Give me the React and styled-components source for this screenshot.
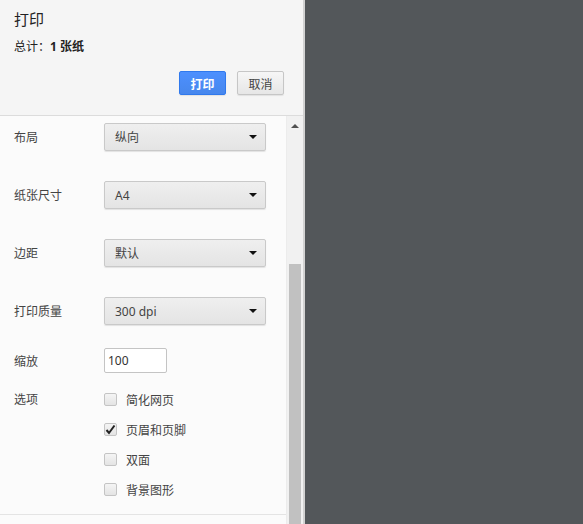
import React from "react";
import styled, { createGlobalStyle } from "styled-components";

const GlobalStyle = createGlobalStyle`
  html, body {
    margin: 0;
    padding: 0;
    height: 100%;
    overflow: hidden;
  }
  body {
    font-family: "Noto Sans", "Noto Sans CJK SC", sans-serif;
    font-size: 12px;
    color: #333;
  }
`;

const Page = styled.div`
  display: flex;
  width: 583px;
  height: 524px;
  background: #53575a;
`;

const Sidebar = styled.div`
  width: 303px;
  flex-shrink: 0;
  display: flex;
  flex-direction: column;
  border-right: 2px solid #d2d2d2;
  background: #fbfbfb;
`;

const Header = styled.div`
  height: 116px;
  box-sizing: border-box;
  padding: 9px 19px 0 14px;
  background: #f5f5f5;
  border-bottom: 1px solid #dcdcdc;
  display: flex;
  flex-direction: column;
`;

const Title = styled.h1`
  margin: 0;
  font-size: 15px;
  font-weight: normal;
  line-height: 20px;
  color: #222;
`;

const Summary = styled.div`
  margin-top: 9px;
  line-height: 18px;
  color: #222;

  b {
    font-weight: bold;
  }
`;

const Buttons = styled.div`
  display: flex;
  justify-content: flex-end;
  gap: 11px;
  margin-top: 15px;
`;

const Button = styled.button`
  width: 47px;
  height: 24px;
  padding: 0;
  border-radius: 2px;
  font-family: "Noto Sans CJK SC", sans-serif;
  font-size: 12px;
  cursor: pointer;
  border: 1px solid ${(p) => (p.$primary ? "#3079ed" : "#c6c6c6")};
  background: ${(p) =>
    p.$primary
      ? "linear-gradient(#4d90fe, #4787ed)"
      : "linear-gradient(#f6f6f6, #e6e6e6)"};
  color: ${(p) => (p.$primary ? "#fff" : "#444")};
  font-weight: ${(p) => (p.$primary ? "bold" : "normal")};
  box-shadow: 0 1px 1px rgba(0, 0, 0, 0.08);
`;

const Body = styled.div`
  flex: 1;
  display: flex;
  min-height: 0;
`;

const Content = styled.div`
  flex: 1;
  display: flex;
  flex-direction: column;
`;

const Settings = styled.div`
  padding: 7px 0 18px 14px;
  border-bottom: 1px solid #e4e4e4;
`;

const Row = styled.div`
  display: flex;
  align-items: ${(p) => (p.$top ? "flex-start" : "center")};
  margin-bottom: ${(p) => p.$gap || 0}px;
`;

const Label = styled.div`
  width: 90px;
  flex-shrink: 0;
  color: #444;
  line-height: ${(p) => (p.$top ? "13px" : "normal")};
`;

const Select = styled.div`
  width: 162px;
  height: 28px;
  box-sizing: border-box;
  display: flex;
  align-items: center;
  justify-content: space-between;
  padding: 0 8px 0 10px;
  border: 1px solid #c9c9c9;
  border-radius: 2px;
  background: linear-gradient(#efefef, #e4e4e4);
  box-shadow: 0 1px 1px rgba(0, 0, 0, 0.1);
  color: #444;
`;

const Caret = styled.span`
  width: 0;
  height: 0;
  border-left: 4px solid transparent;
  border-right: 4px solid transparent;
  border-top: 4px solid #111;
`;

const Input = styled.input`
  width: 63px;
  height: 25px;
  box-sizing: border-box;
  padding: 0 3px;
  border: 1px solid #c4c4c4;
  border-radius: 2px;
  background: #fff;
  font-family: "Noto Sans", sans-serif;
  font-size: 12px;
  color: #333;
  outline: none;
`;

const Options = styled.div`
  display: flex;
  flex-direction: column;
  gap: 17px;
`;

const Option = styled.label`
  display: flex;
  align-items: center;
  height: 13px;
  color: #444;
`;

const Box = styled.span`
  width: 13px;
  height: 13px;
  box-sizing: border-box;
  margin-right: 9px;
  border: 1px solid #c4c4c4;
  border-radius: 2px;
  background: linear-gradient(#f4f4f4, #e4e4e4);
  display: flex;
  align-items: center;
  justify-content: center;
`;

const Scrollbar = styled.div`
  width: 16px;
  flex-shrink: 0;
  background: #f1f1f1;
  border-left: 1px solid #ececec;
  display: flex;
  flex-direction: column;
  align-items: center;
`;

const ArrowUp = styled.span`
  margin-top: 8px;
  width: 0;
  height: 0;
  border-left: 4px solid transparent;
  border-right: 4px solid transparent;
  border-bottom: 4px solid #505050;
`;

const Thumb = styled.div`
  margin-top: 136px;
  width: 12px;
  flex: 1;
  background: #c1c1c1;
`;

const Preview = styled.div`
  flex: 1;
  background: #53575a;
`;

const Check = () => (
  <svg width="11" height="11" viewBox="0 0 11 11">
    <path d="M1.5 6 L4 9 L9.5 1.5" fill="none" stroke="#222" strokeWidth="2" />
  </svg>
);

const selects = [
  ["布局", "纵向"],
  ["纸张尺寸", "A4"],
  ["边距", "默认"],
  ["打印质量", "300 dpi"],
];

const options = [
  ["简化网页", false],
  ["页眉和页脚", true],
  ["双面", false],
  ["背景图形", false],
];

const App = () => (
  <Page>
    <GlobalStyle />
    <Sidebar>
      <Header>
        <Title>打印</Title>
        <Summary>
          总计：<b>1 张纸</b>
        </Summary>
        <Buttons>
          <Button $primary>打印</Button>
          <Button>取消</Button>
        </Buttons>
      </Header>
      <Body>
        <Content>
          <Settings>
            {selects.map(([label, value], i) => (
              <Row key={label} $gap={i === 3 ? 23 : 30}>
                <Label>{label}</Label>
                <Select>
                  {value}
                  <Caret />
                </Select>
              </Row>
            ))}
            <Row $gap={20}>
              <Label>缩放</Label>
              <Input defaultValue="100" />
            </Row>
            <Row $top>
              <Label $top>选项</Label>
              <Options>
                {options.map(([label, checked]) => (
                  <Option key={label}>
                    <Box>{checked && <Check />}</Box>
                    {label}
                  </Option>
                ))}
              </Options>
            </Row>
          </Settings>
        </Content>
        <Scrollbar>
          <ArrowUp />
          <Thumb />
        </Scrollbar>
      </Body>
    </Sidebar>
    <Preview />
  </Page>
);

export default App;
